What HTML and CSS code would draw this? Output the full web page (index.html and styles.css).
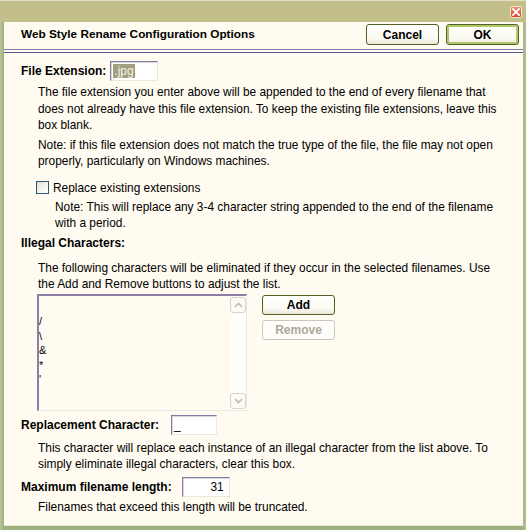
FILE: index.html
```html
<!DOCTYPE html>
<html>
<head>
<meta charset="utf-8">
<title>Web Style Rename Configuration Options</title>
<link rel="stylesheet" href="styles.css">
</head>
<body>
<div class="window">
  <div class="titlebar">
    <span class="close" aria-label="Close">
      <svg width="8" height="8" viewBox="0 0 8 8"><path d="M1 1L7 7M7 1L1 7" stroke="#fff" stroke-width="1.8" stroke-linecap="square"/></svg>
    </span>
  </div>
  <div class="frame">
    <div class="client">
      <div class="header">
        <h1 class="title">Web Style Rename Configuration Options</h1>
        <button class="btn">Cancel</button>
        <button class="btn btn-default">OK</button>
      </div>
      <div class="sep"></div>
      <div class="content">
        <div class="field field-ext">
          <span class="label">File Extension:</span>
          <span class="input input-ext"><span class="sel">.jpg</span></span>
        </div>
        <p class="help help-ext">The file extension you enter above will be appended to the end of every filename that<br>does not already have this file extension. To keep the existing file extensions, leave this<br>box blank.</p>
        <p class="help help-note">Note: if this file extension does not match the true type of the file, the file may not open<br>properly, particularly on Windows machines.</p>
        <div class="check-row">
          <span class="checkbox"></span>
          <span class="check-label">Replace existing extensions</span>
        </div>
        <p class="help help-sub">Note: This will replace any 3-4 character string appended to the end of the filename<br>with a period.</p>
        <div class="label section-label">Illegal Characters:</div>
        <p class="help help-illegal">The following characters will be eliminated if they occur in the selected filenames. Use<br>the Add and Remove buttons to adjust the list.</p>
        <div class="list-row">
          <div class="listbox">
            <div class="items">
              <div class="item">&nbsp;</div>
              <div class="item">/</div>
              <div class="item">\</div>
              <div class="item">&amp;</div>
              <div class="item">*</div>
              <div class="item">'</div>
            </div>
            <div class="scrollbar">
              <span class="arrow"><svg width="9" height="6" viewBox="0 0 9 6"><path d="M1 5L4.5 1.5L8 5" fill="none" stroke="#bdbcae" stroke-width="1.6"/></svg></span>
              <span class="arrow"><svg width="9" height="6" viewBox="0 0 9 6"><path d="M1 1L4.5 4.5L8 1" fill="none" stroke="#bdbcae" stroke-width="1.6"/></svg></span>
            </div>
          </div>
          <div class="list-buttons">
            <button class="btn btn-small">Add</button>
            <button class="btn btn-small btn-disabled">Remove</button>
          </div>
        </div>
        <div class="field field-repl">
          <span class="label">Replacement Character:</span>
          <span class="input input-repl">_</span>
        </div>
        <p class="help help-repl">This character will replace each instance of an illegal character from the list above. To<br>simply eliminate illegal characters, clear this box.</p>
        <div class="field field-max">
          <span class="label">Maximum filename length:</span>
          <span class="input input-max">31</span>
        </div>
        <p class="help help-max">Filenames that exceed this length will be truncated.</p>
      </div>
    </div>
  </div>
</div>
</body>
</html>
```
FILE: styles.css
```css
html, body {
  margin: 0;
  padding: 0;
}
body {
  width: 526px;
  height: 530px;
  overflow: hidden;
  font-family: "Liberation Sans", Arial, sans-serif;
  font-size: 11.9px;
  color: #000;
  background: #a7b68a;
}
.window {
  height: 530px;
  display: flex;
  flex-direction: column;
}
.titlebar {
  height: 22px;
  box-sizing: border-box;
  background: #c3bf8a;
  border-top: 1px solid #dfe0bd;
  display: flex;
  justify-content: flex-end;
  align-items: flex-start;
  padding: 5px 4px 0 0;
}
.close {
  width: 12px;
  height: 12px;
  box-sizing: border-box;
  border: 1px solid #f4e6dc;
  border-radius: 2px;
  background: linear-gradient(#ec8b6a, #d9431c);
  display: flex;
  align-items: center;
  justify-content: center;
}
.frame {
  flex: 1;
  display: flex;
  padding: 0 3px 4px 4px;
  background: linear-gradient(90deg, #b9c49d 0, #9fb07f 4px, #9fb07f 522px, #b5c297 526px);
}
.client {
  flex: 1;
  background: #fffbf0;
  display: flex;
  flex-direction: column;
  border-bottom: 1px solid #e4e8d6;
}
.header {
  display: flex;
  align-items: flex-start;
  gap: 7px;
  height: 27px;
  box-sizing: border-box;
  padding: 2px 4px 0 17px;
}
.title {
  flex: 1;
  margin: 0;
  font-size: 11.8px;
  font-weight: bold;
  line-height: 21px;
}
.btn {
  width: 73px;
  height: 21px;
  box-sizing: border-box;
  padding: 0;
  border: 1px solid #4f6424;
  border-radius: 3px;
  background: linear-gradient(#fffffd 0%, #fbfaf3 70%, #e9e7d8 100%);
  font-family: "Liberation Sans", Arial, sans-serif;
  font-size: 12px;
  font-weight: bold;
  color: #000;
}
.btn-default {
  box-shadow: inset 0 0 0 2px #b2c76a;
}
.sep {
  height: 2px;
  border-top: 1px solid #7b7ba6;
  border-bottom: 1px solid #5d5d8e;
}
.content {
  padding-left: 17px;
}
.label {
  font-size: 12px;
  font-weight: bold;
}
.field {
  display: flex;
  align-items: center;
  gap: 4px;
  height: 20px;
}
.input {
  box-sizing: border-box;
  height: 20px;
  background: #fff;
  border-style: solid;
  border-width: 1px;
  border-color: #7f7c9e #ebe8dc #ebe8dc #7f7c9e;
  box-shadow: inset 1px 1px 0 #d9d6e2;
  line-height: 18px;
  padding: 0 2px;
  font-size: 11.9px;
}
.field-ext { margin-top: 8px; }
.input-ext { width: 48px; padding-left: 2px; }
.sel {
  background: #a19f7f;
  color: #f4f3ea;
  padding: 0 1px;
}
.help {
  margin: 0 0 0 17px;
  line-height: 16.5px;
}
.help-ext { margin-top: 3px; }
.help-note { margin-top: 3px; }
.check-row {
  display: flex;
  align-items: center;
  gap: 4px;
  height: 16px;
  margin: 10px 0 0 15px;
}
.checkbox {
  width: 13px;
  height: 13px;
  box-sizing: border-box;
  border: 1px solid #2b5a7a;
  background: linear-gradient(135deg, #d8dccb 0%, #f2f2ea 45%, #ffffff 100%);
}
.help-sub { margin: 3px 0 0 34px; }
.section-label { margin-top: 3px; line-height: 16px; }
.help-illegal { margin-top: 9px; }
.list-row {
  display: flex;
  align-items: flex-start;
  gap: 15px;
  margin: 1px 0 0 16px;
}
.listbox {
  width: 210px;
  height: 117px;
  box-sizing: border-box;
  border-style: solid;
  border-width: 2px 1px 1px 2px;
  border-color: #8e7da4 #ece9e2 #ece9e2 #8e7da4;
  background: #fffbf0;
  display: flex;
}
.items {
  flex: 1;
  padding: 4px 0 0 0;
  font-size: 11px;
  line-height: 14.5px;
}
.item {
  height: 14.5px;
}
.scrollbar {
  width: 16px;
  background: #fefefa;
  display: flex;
  flex-direction: column;
  justify-content: space-between;
  padding: 1px 0 1px 0;
}
.arrow {
  width: 16px;
  height: 16px;
  box-sizing: border-box;
  border: 1px solid #d6d4c7;
  border-radius: 3px;
  background: #fcfbf5;
  display: flex;
  align-items: center;
  justify-content: center;
}
.list-buttons {
  display: flex;
  flex-direction: column;
  gap: 5px;
  margin-top: 1px;
}
.btn-small {
  width: 73px;
  height: 20px;
}
.btn-disabled {
  border-color: #c9c7ba;
  color: #aca899;
  background: #fefdf9;
}
.field-repl { margin-top: 4px; gap: 12px; }
.input-repl { width: 46px; }
.help-repl { margin-top: 5px; }
.field-max { margin-top: 4px; gap: 10px; }
.input-max { width: 48px; text-align: right; padding-right: 5px; }
.help-max { margin-top: 2px; }
```
